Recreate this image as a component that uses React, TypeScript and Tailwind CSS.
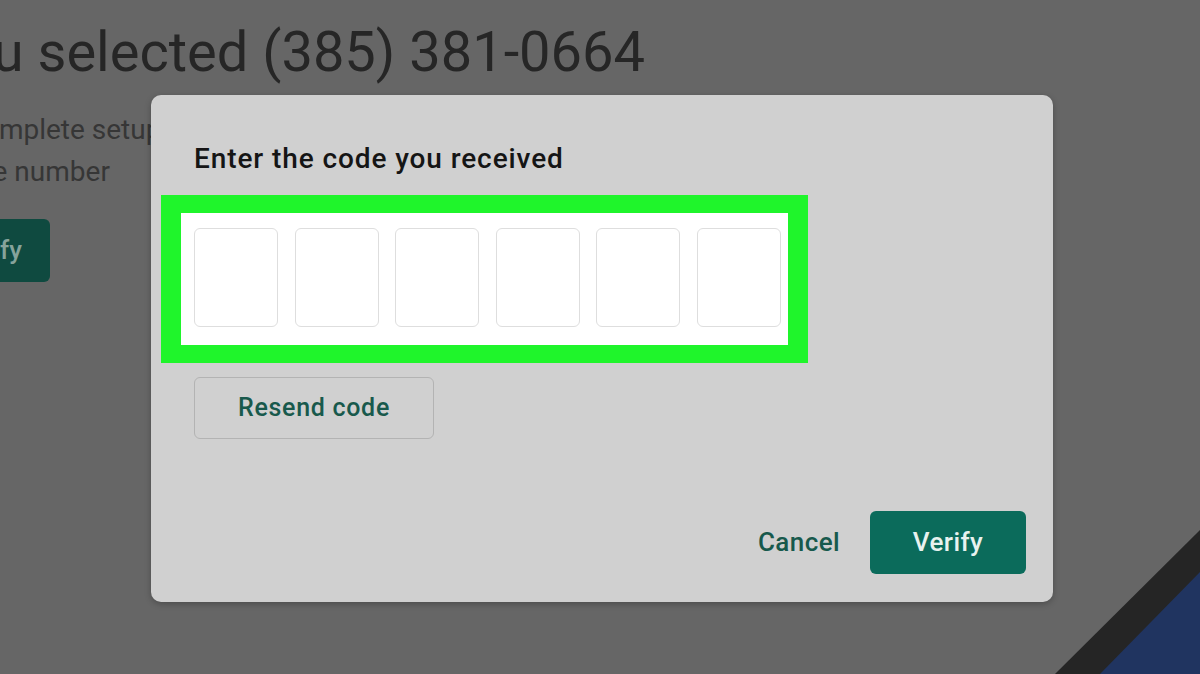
const font = { fontFamily: "Roboto, 'Open Sans', sans-serif" };

// Backdrop: the phone-setup page dimmed behind the modal.
function SetupPage() {
  return (
    <div className="flex flex-col">
      <div className="flex w-[645px] justify-end overflow-visible whitespace-nowrap pt-[24px] text-[56px] leading-none text-[#262626]">
        You selected (385) 381-0664
      </div>
      <div className="ml-[-70px] mt-[29px] text-[28px] leading-[42px] text-[#363636]">
        <div className="whitespace-nowrap">To complete setup, verify your</div>
        <div className="whitespace-nowrap">phone number</div>
      </div>
      <div className="ml-[-70px] mt-[26px] flex h-[63px] w-[120px] items-center justify-end rounded-md bg-[#0f4a40] pr-[28px] text-[26px] font-medium text-[#86a39b]">
        Verify
      </div>
    </div>
  );
}

function CodeBoxes() {
  return (
    <div className="ml-[-33px] mt-[21px] w-[647px] border-x-[20px] border-y-[18px] border-[#1ff52b]">
      <div className="flex gap-[16.5px] bg-white pb-[18px] pl-[13px] pt-[15px]">
        {[0, 1, 2, 3, 4, 5].map((i) => (
          <div key={i} className="h-[99px] w-[84px] rounded-md border-[1.5px] border-[#dedede] bg-white" />
        ))}
      </div>
    </div>
  );
}

function CodeDialog() {
  return (
    <div className="absolute left-[151px] top-[95px] flex h-[507px] w-[902px] flex-col rounded-[10px] bg-[#d0d0d0] pl-[43px] pt-[48px] shadow-[0_2px_6px_rgba(0,0,0,0.25)]">
      <div className="whitespace-nowrap text-[28px] font-medium leading-[31px] tracking-[0.9px] text-[#151515]">
        Enter the code you received
      </div>
      <CodeBoxes />
      <button className="mt-[14px] flex h-[62px] w-[240px] items-center justify-center rounded-md border-[1.5px] border-[#b3b3b3] text-[25px] font-medium tracking-[0.7px] text-[#18594c]">
        Resend code
      </button>
      <div className="mt-auto flex items-center justify-end gap-[30px] pb-[28px] pr-[27px]">
        <button className="text-[26px] font-medium tracking-[0.4px] text-[#17594c]">Cancel</button>
        <button className="flex h-[63px] w-[156px] items-center justify-center rounded-md bg-[#0b6b5b] text-[26px] font-medium tracking-[0.4px] text-[#e8f2ef]">
          Verify
        </button>
      </div>
    </div>
  );
}

export default function App() {
  return (
    <div className="relative h-[674px] w-[1200px] overflow-hidden bg-[#666666]" style={font}>
      <SetupPage />
      <CodeDialog />
      {/* corner of the laptop frame peeking in */}
      <svg className="absolute bottom-0 right-0" width="150" height="150" viewBox="0 0 150 150">
        <polygon points="150,6 150,150 5,150" fill="#252525" />
        <polygon points="150,48 150,150 50,150" fill="#203460" />
      </svg>
    </div>
  );
}
